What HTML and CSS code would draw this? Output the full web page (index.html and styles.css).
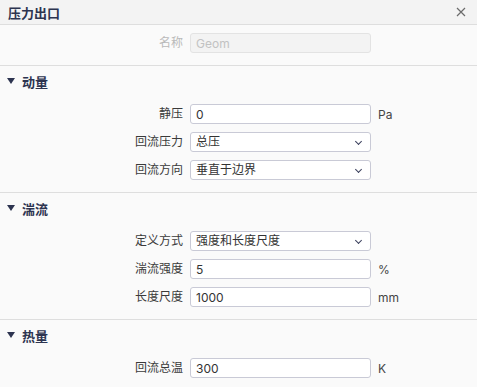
FILE: index.html
```html
<!DOCTYPE html>
<html>

<head>
    <title>压力出口</title>
    <link rel="stylesheet" href="styles.css">
</head>

<body>
    <div class="panel">
        <div class="panel-header">
            <span class="panel-title">压力出口</span>
            <button class="close-btn" title="关闭">
                <svg width="10" height="10" viewBox="0 0 10 10">
                    <path d="M1 1 L9 9 M9 1 L1 9" stroke="#6b6b6b" stroke-width="1.2" fill="none" />
                </svg>
            </button>
        </div>

        <!-- Name -->
        <div class="rows top-rows">
            <label class="label muted">名称</label>
            <input type="text" class="field" value="Geom" disabled>
            <span class="unit"></span>
        </div>

        <!-- 动量 -->
        <div class="section">
            <div class="section-header"><span class="caret"></span>动量</div>
            <div class="rows">
                <label class="label">静压</label>
                <input type="text" class="field" value="0">
                <span class="unit">Pa</span>

                <label class="label">回流压力</label>
                <div class="select">总压</div>
                <span class="unit"></span>

                <label class="label">回流方向</label>
                <div class="select">垂直于边界</div>
                <span class="unit"></span>
            </div>
        </div>

        <!-- 湍流 -->
        <div class="section">
            <div class="section-header"><span class="caret"></span>湍流</div>
            <div class="rows">
                <label class="label">定义方式</label>
                <div class="select">强度和长度尺度</div>
                <span class="unit"></span>

                <label class="label">湍流强度</label>
                <input type="text" class="field" value="5">
                <span class="unit">%</span>

                <label class="label">长度尺度</label>
                <input type="text" class="field" value="1000">
                <span class="unit">mm</span>
            </div>
        </div>

        <!-- 热量 -->
        <div class="section">
            <div class="section-header"><span class="caret"></span>热量</div>
            <div class="rows">
                <label class="label">回流总温</label>
                <input type="text" class="field" value="300">
                <span class="unit">K</span>
            </div>
        </div>
    </div>
</body>

</html>
```

FILE: styles.css
```css
* {
    margin: 0;
    padding: 0;
    box-sizing: border-box;
}

body {
    font-family: Inter, "Noto Sans CJK SC", sans-serif;
    font-size: 12px;
    background-color: #fafafa;
    color: #333333;
}

.panel {
    width: 477px;
}

.panel-header {
    height: 25px;
    background: #f3f3f3;
    border-bottom: 1px solid #dedede;
    display: flex;
    align-items: center;
    justify-content: space-between;
    padding: 0 8px;
}

.panel-title {
    font-size: 13px;
    font-weight: 700;
    color: #2d3450;
}

.close-btn {
    border: none;
    background: none;
    width: 12px;
    height: 12px;
    display: flex;
    align-items: center;
    justify-content: center;
    margin-right: 2px;
    cursor: pointer;
}

.rows {
    display: grid;
    grid-template-columns: 183px 181px auto;
    column-gap: 7px;
    row-gap: 8px;
    align-items: center;
    padding: 8px 0 12px;
}

.label {
    text-align: right;
    color: #3a3a3a;
    line-height: 20px;
}

.label.muted {
    color: #b9b9b9;
}

.field,
.select {
    height: 20px;
    width: 181px;
    border: 1px solid #c9cad6;
    border-radius: 3px;
    background: #ffffff;
    font-family: inherit;
    font-size: 12px;
    color: #333333;
    padding: 0 5px;
    line-height: 18px;
    outline: none;
}

.field:disabled {
    background: #f3f3f3;
    border-color: #e3e3e3;
    color: #c2c2c2;
}

.select {
    position: relative;
}

.select::after {
    content: '';
    position: absolute;
    right: 9px;
    top: 6px;
    width: 4px;
    height: 4px;
    border-right: 1.2px solid #3a3f5c;
    border-bottom: 1.2px solid #3a3f5c;
    transform: rotate(45deg);
}

.unit {
    color: #444444;
}

.section {
    border-top: 1px solid #dedede;
}

.section-header {
    height: 30px;
    display: flex;
    align-items: center;
    padding-left: 7px;
    font-size: 13px;
    font-weight: 700;
    color: #2d3450;
}

.caret {
    width: 0;
    height: 0;
    border-left: 4.5px solid transparent;
    border-right: 4.5px solid transparent;
    border-top: 6px solid #2d3450;
    margin-right: 7px;
}
```
